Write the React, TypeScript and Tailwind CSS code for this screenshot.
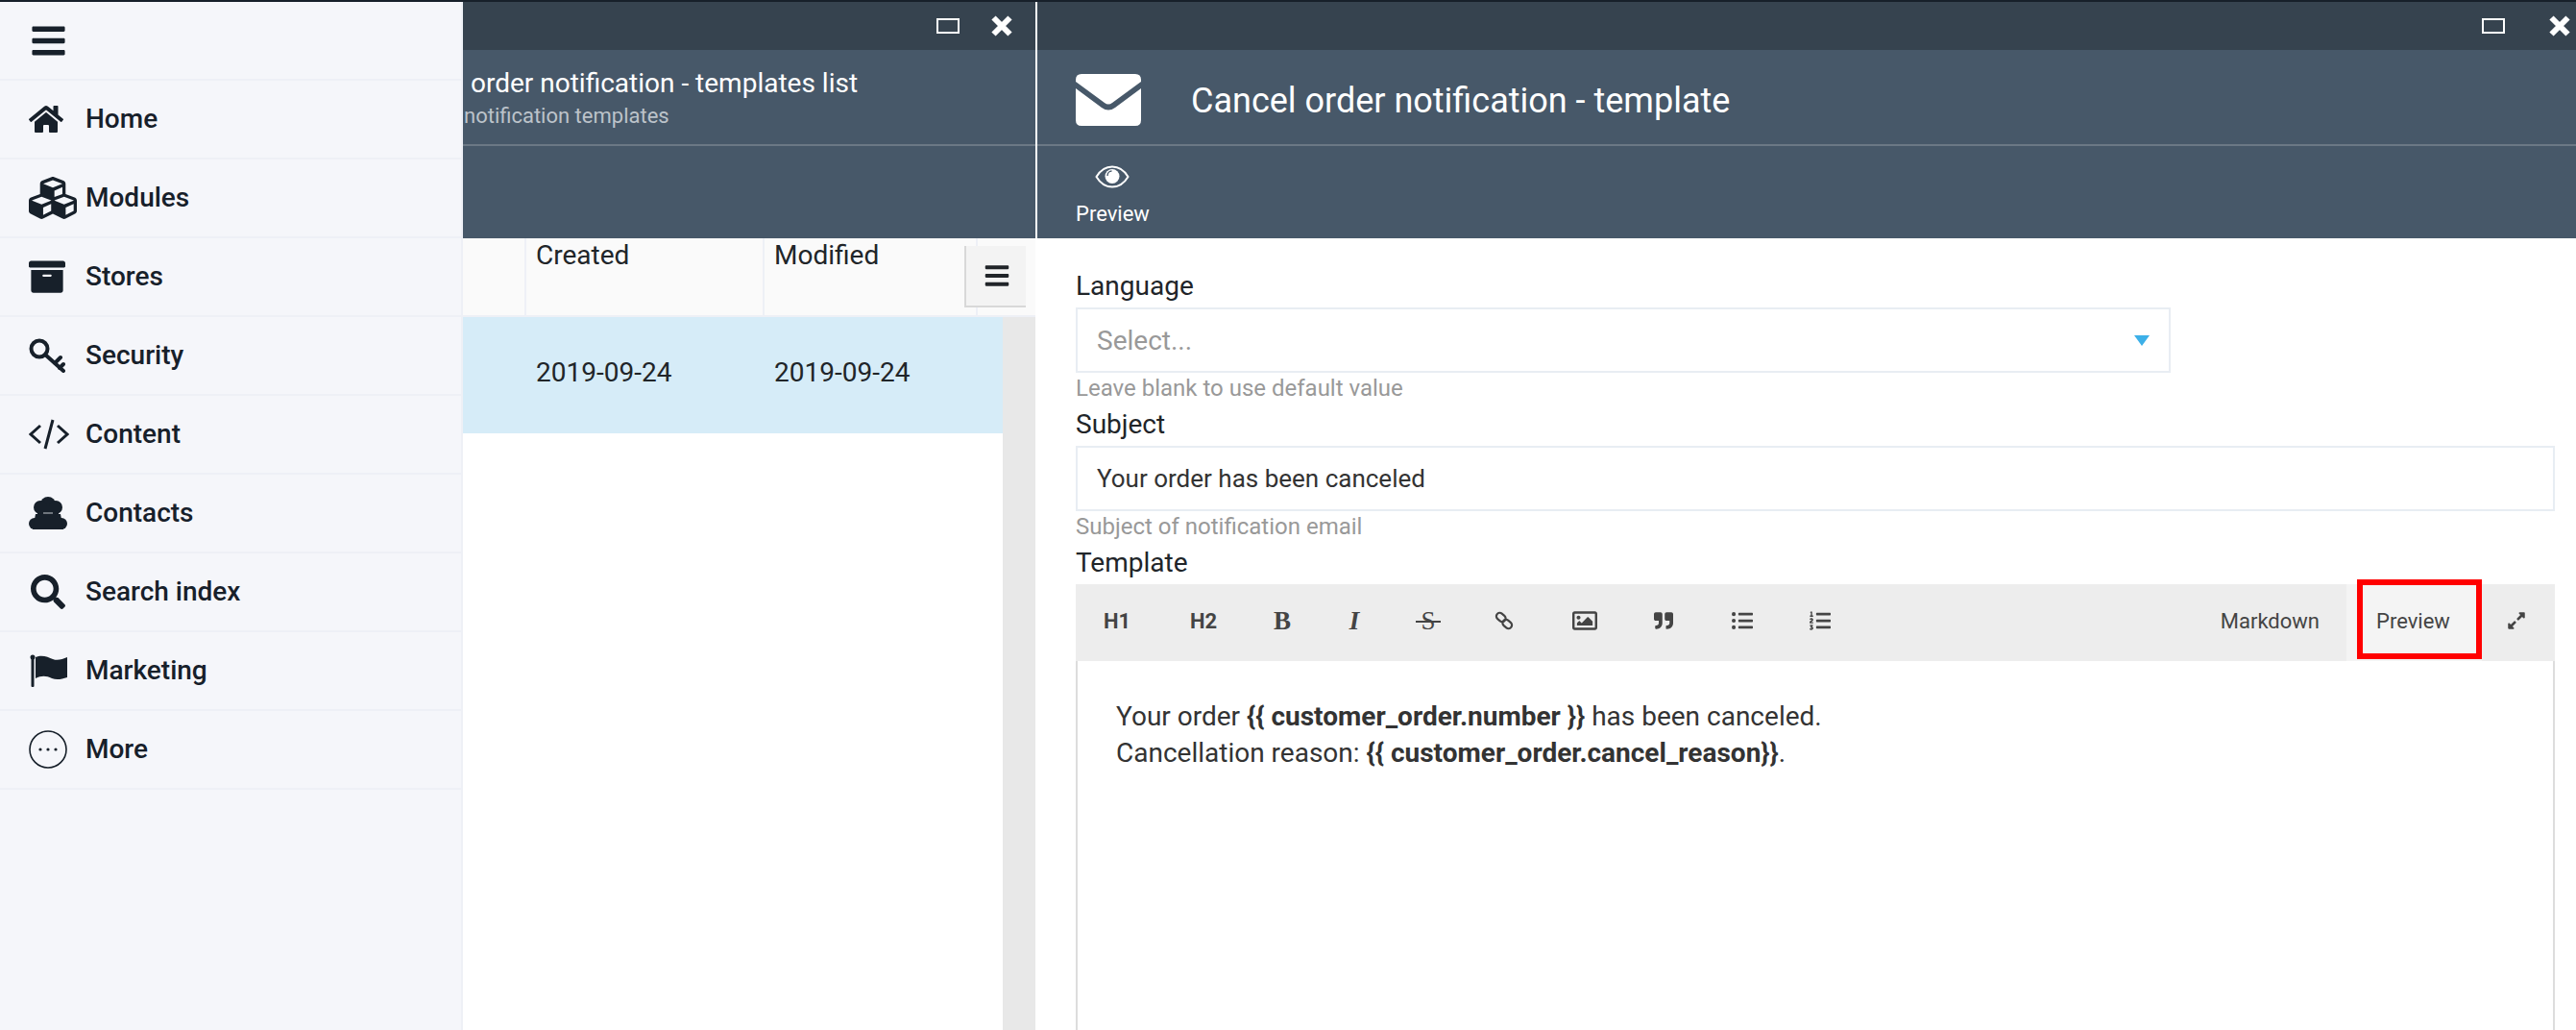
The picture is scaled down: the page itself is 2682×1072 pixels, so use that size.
import { FaHome, FaCubes, FaArchive, FaSearch, FaBars, FaRegImage, FaQuoteRight, FaListUl, FaListOl, FaExpandAlt } from 'react-icons/fa'

function KeyIcon() {
  return (
    <svg viewBox="0 0 38 36" className="w-[38px] h-[36px]" fill="none" stroke="currentColor" strokeWidth="4">
      <circle cx="11" cy="11" r="8.5" />
      <path d="M17 17 L36 34 M27 26 L33 20 M32 31 L36 27" strokeLinecap="round" />
    </svg>
  )
}

function CodeIcon() {
  return (
    <svg viewBox="0 0 42 32" className="w-[42px] h-[32px]" fill="none" stroke="currentColor" strokeWidth="3">
      <path d="M12 7 L2 16 L12 25 M30 7 L40 16 L30 25 M25 1 L17 31" />
    </svg>
  )
}

function ContactsIcon() {
  return (
    <svg viewBox="0 0 40 34" className="w-[40px] h-[34px]" fill="currentColor">
      <circle cx="20" cy="8" r="8" />
      <circle cx="12" cy="11" r="7" />
      <circle cx="28" cy="11" r="7" />
      <rect x="9" y="10" width="22" height="10" />
      <rect x="0" y="22" width="14" height="12" rx="6" />
      <rect x="26" y="22" width="14" height="12" rx="6" />
      <path d="M7 18 H33 L36 34 H4 Z" />
      <path d="M15 17 H25" stroke="#f5f6fa" strokeWidth="0.8" />
    </svg>
  )
}

function FlagIcon() {
  return (
    <svg viewBox="0 0 40 34" className="w-[40px] h-[34px]" fill="currentColor">
      <circle cx="4" cy="3" r="2.5" />
      <rect x="2.5" y="3" width="3" height="31" rx="1" />
      <path d="M7 3 C14 0 20 3 25 5 C30 7 35 5 40 3 L40 24 C34 26 29 27 24 25 C18 22 13 22 7 25 Z" />
    </svg>
  )
}

function MoreIcon() {
  return (
    <svg viewBox="0 0 40 40" className="w-[40px] h-[40px]" fill="none" stroke="currentColor" strokeWidth="1.6">
      <circle cx="20" cy="20" r="19" />
      <circle cx="12" cy="20" r="1.6" fill="currentColor" stroke="none" />
      <circle cx="20" cy="20" r="1.6" fill="currentColor" stroke="none" />
      <circle cx="28" cy="20" r="1.6" fill="currentColor" stroke="none" />
    </svg>
  )
}

function EnvelopeIcon() {
  return (
    <svg viewBox="0 0 68 54" className="w-[68px] h-[54px]" fill="white">
      <path d="M0 6 Q0 0 6 0 H62 Q68 0 68 6 V8 L38 30 Q34 33 30 30 L0 8 Z" />
      <path d="M0 15 L27 35 Q34 40 41 35 L68 15 V48 Q68 54 62 54 H6 Q0 54 0 48 Z" />
    </svg>
  )
}

function EyeIcon() {
  return (
    <svg viewBox="0 0 36 24" className="w-[36px] h-[24px]" fill="none" stroke="white" strokeWidth="2">
      <path d="M1.5 12 C6 4.5 11.5 1.5 18 1.5 C24.5 1.5 30 4.5 34.5 12 C30 19.5 24.5 22.5 18 22.5 C11.5 22.5 6 19.5 1.5 12 Z" />
      <circle cx="18" cy="11.5" r="7.5" fill="white" stroke="none" />
      <path d="M13 11 C13 8 15 6 17.5 6" stroke="#475869" strokeWidth="1.4" />
    </svg>
  )
}

function CloseIcon() {
  return (
    <svg viewBox="0 0 22 22" className="w-[22px] h-[22px]" fill="none" stroke="white" strokeWidth="6">
      <path d="M2.5 2.5 L19.5 19.5 M19.5 2.5 L2.5 19.5" />
    </svg>
  )
}

function LinkIcon() {
  return (
    <svg viewBox="0 0 20 20" className="w-[20px] h-[20px]" fill="none" stroke="currentColor" strokeWidth="2.2">
      <rect x="1.5" y="3" width="10.5" height="7" rx="3.5" transform="rotate(40 6.75 6.5)" />
      <rect x="8" y="10" width="10.5" height="7" rx="3.5" transform="rotate(40 13.25 13.5)" />
    </svg>
  )
}

const menu = [
  { label: 'Home', icon: <FaHome className="text-[36px]" /> },
  { label: 'Modules', icon: <FaCubes className="text-[50px]" /> },
  { label: 'Stores', icon: <FaArchive className="text-[38px]" /> },
  { label: 'Security', icon: <KeyIcon /> },
  { label: 'Content', icon: <CodeIcon /> },
  { label: 'Contacts', icon: <ContactsIcon /> },
  { label: 'Search index', icon: <FaSearch className="text-[36px] ml-[2px]" /> },
  { label: 'Marketing', icon: <FlagIcon /> },
  { label: 'More', icon: <MoreIcon /> },
]

function Sidebar() {
  return (
    <div className="w-[482px] shrink-0 bg-[#f5f6fa] border-r-2 border-[#eef0f6]">
      <div className="h-[82px] flex items-center pl-[31px] border-b-2 border-[#eef0f6]">
        <FaBars className="text-[39px] text-[#17202a]" />
      </div>
      {menu.map((m) => (
        <div key={m.label} className="h-[82px] flex items-center border-b-2 border-[#eef0f6] text-[#17202a]">
          <div className="w-[89px] pl-[30px] shrink-0 flex">{m.icon}</div>
          <span className="text-[28px] font-medium">{m.label}</span>
        </div>
      ))}
    </div>
  )
}

function TitleBar({ gap, right }: { gap: string; right: string }) {
  return (
    <div className="h-[50px] bg-[#36434f] flex items-center justify-end">
      <div className={'w-[24px] h-[16px] border-2 border-white ' + gap} />
      <div className={right}><CloseIcon /></div>
    </div>
  )
}

function ListPanel() {
  return (
    <div className="w-[596px] shrink-0 flex flex-col">
      <TitleBar gap="mr-[33px]" right="mr-[24px]" />
      <div className="h-[100px] bg-[#475869] border-b-2 border-[#6b7885] pl-[8px] pt-[17px]">
        <div className="text-[28px] leading-[36px] text-white">order notification - templates list</div>
        <div className="text-[22px] leading-[30px] mt-[1px] text-[#bcc3ca] -ml-[7px]">notification templates</div>
      </div>
      <div className="h-[96px] bg-[#475869]" />
      <div className="h-[82px] bg-[#fafafa] border-b-2 border-[#eef0f6] flex text-[28px] leading-[36px] text-[#212529]">
        <div className="w-[66px] border-r-2 border-[#eef0f6]" />
        <div className="w-[248px] pl-[10px] border-r-2 border-[#eef0f6]">Created</div>
        <div className="w-[222px] pl-[10px] border-r-2 border-[#eef0f6]">Modified</div>
        <div className="relative flex-1">
          <div className="absolute left-[-14px] top-[8px] w-[64px] h-[64px] bg-[#f3f3f3] border-l-2 border-b-2 border-[#d8d8d8] flex items-center justify-center pl-[2px]">
            <FaBars className="text-[28px]" />
          </div>
        </div>
      </div>
      <div className="flex-1 flex">
        <div className="flex-1">
          <div className="h-[121px] bg-[#d6ecf8] flex items-center pb-[6px] text-[28px] text-[#212529]">
            <div className="w-[66px]" />
            <div className="w-[248px] pl-[10px]">2019-09-24</div>
            <div className="w-[212px] pl-[10px]">2019-09-24</div>
          </div>
        </div>
        <div className="w-[34px] bg-[#e8e8e8]" />
      </div>
    </div>
  )
}

function HelpText({ children }: { children: string }) {
  return <div className="text-[24px] leading-[32px] text-[#999]">{children}</div>
}

function Label({ children }: { children: string }) {
  return <div className="text-[28px] leading-[36px] text-[#212529] mt-[4px]">{children}</div>
}

function Tool({ children, className }: { children: React.ReactNode; className: string }) {
  return <div className={'flex justify-center items-center pb-[4px] ' + className}>{children}</div>
}

function EditorPanel() {
  return (
    <div className="flex-1 flex flex-col border-l-2 border-white">
      <TitleBar gap="mr-[46px]" right="mr-[6px]" />
      <div className="h-[100px] bg-[#475869] border-b-2 border-[#6b7885] flex items-center pl-[40px] pt-[6px]">
        <EnvelopeIcon />
        <div className="ml-[52px] text-[36px] text-white pt-[2px]">Cancel order notification - template</div>
      </div>
      <div className="h-[96px] bg-[#475869] pl-[40px] pt-[20px] text-white flex flex-col items-start">
        <div className="w-[76px] flex justify-center"><EyeIcon /></div>
        <div className="text-[22px] leading-[30px] mt-[12px]">Preview</div>
      </div>
      <div className="flex-1 pl-[40px] pr-[22px] pt-[28px] overflow-hidden">
        <Label>Language</Label>
        <div className="w-[1140px] h-[68px] mt-[4px] border-2 border-[#e8edf3] flex items-center justify-between pl-[20px] pr-[20px] text-[28px] text-[#999]">
          <span className="pt-[2px]">Select...</span>
          <div className="w-0 h-0 border-x-[8px] border-x-transparent border-t-[11px] border-t-[#3db0e8]" />
        </div>
        <HelpText>Leave blank to use default value</HelpText>
        <Label>Subject</Label>
        <div className="h-[68px] mt-[4px] border-2 border-[#e8edf3] flex items-center pl-[20px] text-[26px] text-[#333]">Your order has been canceled</div>
        <HelpText>Subject of notification email</HelpText>
        <Label>Template</Label>
        <div className="h-[80px] bg-[#ededed] flex items-center text-[#444] mt-[4px]">
          <Tool className="w-[86px]"><span className="text-[22px] font-bold">H1</span></Tool>
          <Tool className="w-[94px]"><span className="text-[22px] font-bold">H2</span></Tool>
          <Tool className="w-[70px]"><span className="font-['Liberation_Serif',serif] text-[27px] font-bold">B</span></Tool>
          <Tool className="w-[80px]"><span className="font-['Liberation_Serif',serif] text-[27px] italic font-bold">I</span></Tool>
          <Tool className="w-[74px]">
            <span className="relative font-['Liberation_Serif',serif] text-[27px]">
              S
              <span className="absolute left-[-5px] right-[-5px] top-[50%] h-[2px] bg-[#444]" />
            </span>
          </Tool>
          <Tool className="w-[84px]"><LinkIcon /></Tool>
          <Tool className="w-[84px]"><FaRegImage className="text-[26px]" /></Tool>
          <Tool className="w-[80px]"><FaQuoteRight className="text-[20px]" /></Tool>
          <Tool className="w-[84px]"><FaListUl className="text-[22px]" /></Tool>
          <Tool className="w-[78px]"><FaListOl className="text-[22px]" /></Tool>
          <div className="flex-1" />
          <span className="text-[22px] mr-[28px] pb-[4px]">Markdown</span>
          <div className="relative w-[141px] h-full bg-[#f4f4f4] flex items-center pl-[31px] pb-[4px] text-[22px]">
            Preview
            <div className="absolute left-[11px] -top-[5px] w-[130px] h-[83px] border-[6px] border-[#ff0000]" />
          </div>
          <div className="pb-[4px] ml-[26px] mr-[30px]"><FaExpandAlt className="text-[20px]" /></div>
        </div>
        <div className="h-[400px] border-x-2 border-[#ddd] pl-[40px] pr-[40px] pt-[39px] text-[28px] leading-[38px] text-[#333]">
          <div>Your order <b>{'{{ customer_order.number }}'}</b> has been canceled.</div>
          <div>Cancellation reason: <b>{'{{ customer_order.cancel_reason}}'}</b>.</div>
        </div>
      </div>
    </div>
  )
}

export default function App() {
  return (
    <div className="w-[2682px] h-[1072px] overflow-hidden bg-white font-['Roboto',sans-serif] flex flex-col">
      <div className="h-[2px] bg-[#17202a]" />
      <div className="flex-1 flex min-h-0">
        <Sidebar />
        <ListPanel />
        <EditorPanel />
      </div>
    </div>
  )
}
